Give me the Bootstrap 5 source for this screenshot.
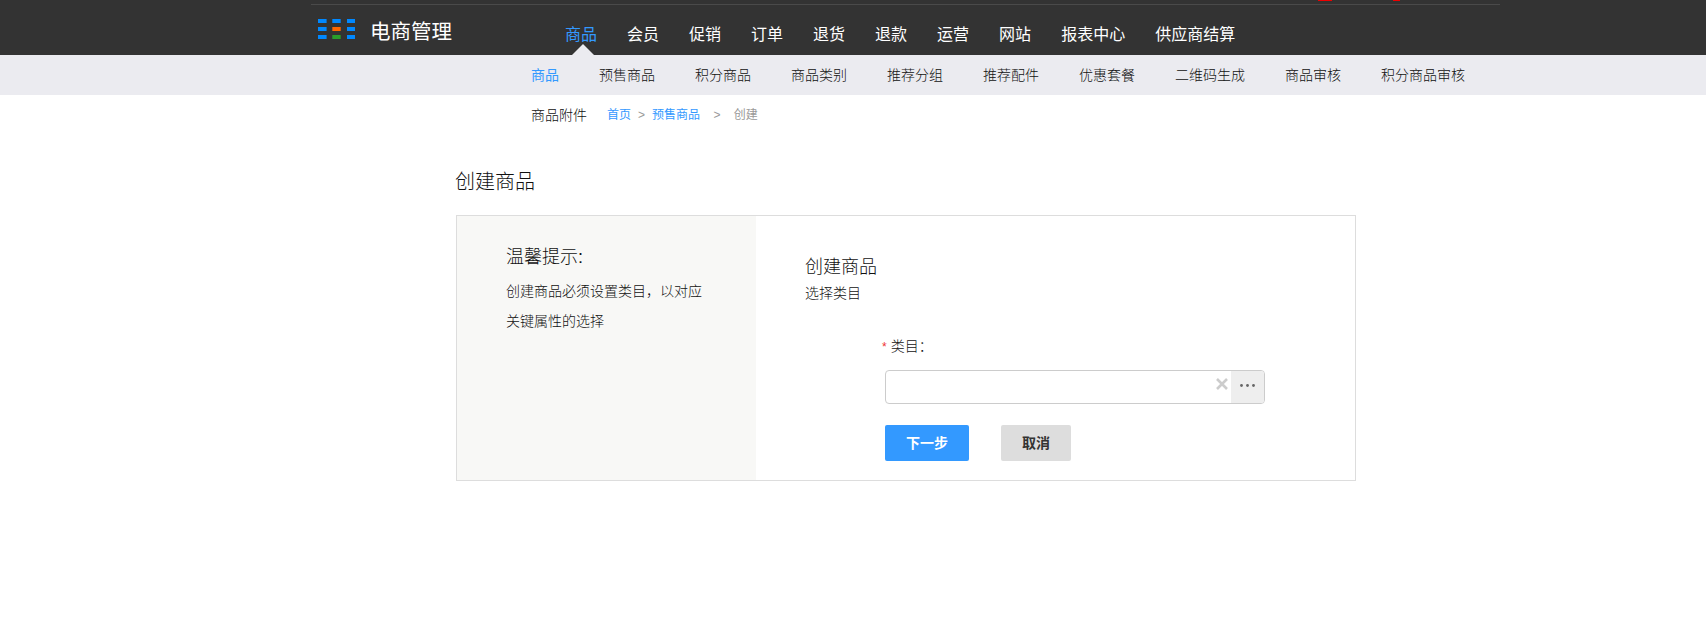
<!DOCTYPE html>
<html lang="zh-CN">
<head>
<meta charset="utf-8">
<title>创建商品</title>
<link href="https://cdn.jsdelivr.net/npm/bootstrap@5.3.0/dist/css/bootstrap.min.css" rel="stylesheet">
<style>
body{font-family:"Liberation Sans","Noto Sans CJK SC",sans-serif;color:#333;background:#fff;font-size:14px;height:623px;overflow:hidden}
a{text-decoration:none}
.hd-bar{background:#333;height:55px}
.hd-strip{height:5px;margin-left:311px;width:1189px;border-bottom:1px solid #4a4a4a;position:relative}
.hd-mark{position:absolute;top:0;height:1px;background:#e00}
.hd-mark.m1{left:1007px;width:14px}
.hd-mark.m2{left:1082px;width:7px}
.hd-main{height:50px;padding-left:318px}
.hd-logo{width:37px;margin-top:14px;display:block}
.hd-title{color:#fff;font-size:20.5px;font-weight:400;margin-left:15px;width:195px;line-height:28px;margin-top:13px}
.hd-nav{font-size:16px;gap:30px;padding-top:17px}
.hd-nav a{color:#fff;line-height:26px;position:relative;display:block;height:33px;font-weight:400}
.hd-nav a.on{color:#39f}
.hd-nav a.on::after{content:"";position:absolute;left:7px;bottom:0;border:11px solid transparent;border-top:0;border-bottom-color:#ebebf0}
.sub-bar{background:#ebebf0;height:40px;padding-left:531px;gap:40px;font-size:14px;line-height:40px;font-weight:300}
.sub-bar a{color:#111}
.sub-bar a.on{color:#39f;font-weight:400}
.crumb-row{height:40px;padding-left:531px;line-height:40px}
.crumb-own{width:76px;color:#111;font-weight:300}
.crumb-row .trail{font-size:12px;color:#999}
.crumb-row .trail a{color:#39f}
.crumb-row .sep{margin:0 7px}
.crumb-row .sep-wide{margin:0 10px}
.page-ttl{font-size:20px;font-weight:300;line-height:28px;margin:33px 0 19px 455px;color:#111}
.panel-box{margin-left:456px;width:900px;height:266px;border:1px solid #ddd}
.tip-side{width:299px;background:#f8f8f6;padding:28px 0 0 49px}
.tip-ttl{font-size:18px;line-height:26px;font-weight:300;margin:0 0 6px;color:#111}
.tip-txt{line-height:30px;margin:0;width:200px;font-size:14px;font-weight:300;color:#111}
.form-side{padding:25px 0 0 49px}
.form-ttl{font-size:18px;line-height:26px;font-weight:300;margin:13px 0 1px;color:#111}
.form-sub{font-size:14px;line-height:24px;margin:0;font-weight:300;color:#111}
.form-body{padding:31px 0 0 80px}
.lab-row{font-size:14px;line-height:20px;margin-left:-3px;margin-bottom:13px;font-weight:300;color:#111}
.lab-row span{color:#e33;font-size:12px;margin-right:4px;font-weight:400}
.pick-box{width:380px;height:34px;border:1px solid #ccc;border-radius:4px;overflow:hidden}
.pick-in{border:0;outline:0;background:transparent;min-width:0}
.pick-x{width:22px;display:flex;align-items:center;justify-content:center;padding:0 0 6px 3px}
.pick-more{width:33px;background:#eee;display:flex;align-items:center;justify-content:center;padding-bottom:3px}
.btn-row{margin-top:21px;gap:32px}
.act{height:36px;border-radius:2px;font-size:14px;font-weight:700;border:0;padding:0}
.act-go{width:84px;background:#39f;color:#fff}
.act-no{width:70px;background:#ddd;color:#333}
</style>
</head>
<body>
<header class="hd-bar">
  <div class="hd-strip"><i class="hd-mark m1"></i><i class="hd-mark m2"></i></div>
  <div class="hd-main d-flex">
    <svg class="hd-logo" viewBox="0 0 37 20" height="20" aria-hidden="true">
      <g fill="#08f">
        <rect x="0" y="0" width="8.6" height="4"/><rect x="14.3" y="0" width="8.4" height="4"/><rect x="29" y="0" width="8" height="4"/>
        <rect x="0" y="8" width="8.6" height="4"/><rect x="29" y="8" width="8" height="4"/>
        <rect x="0" y="16" width="8.6" height="4"/><rect x="29" y="16" width="8" height="4"/>
      </g>
      <rect x="14.3" y="8" width="8.4" height="4" fill="#f60"/>
      <rect x="14.3" y="16" width="8.4" height="4" fill="#2a9d2a"/>
    </svg>
    <div class="hd-title">电商管理</div>
    <nav class="hd-nav d-flex">
      <a class="on" href="#">商品</a><a href="#">会员</a><a href="#">促销</a><a href="#">订单</a><a href="#">退货</a><a href="#">退款</a><a href="#">运营</a><a href="#">网站</a><a href="#">报表中心</a><a href="#">供应商结算</a>
    </nav>
  </div>
</header>
<nav class="sub-bar d-flex">
  <a class="on" href="#">商品</a><a href="#">预售商品</a><a href="#">积分商品</a><a href="#">商品类别</a><a href="#">推荐分组</a><a href="#">推荐配件</a><a href="#">优惠套餐</a><a href="#">二维码生成</a><a href="#">商品审核</a><a href="#">积分商品审核</a>
</nav>
<div class="crumb-row d-flex">
  <div class="crumb-own">商品附件</div>
  <div class="trail"><a href="#">首页</a><span class="sep">&gt;</span><a href="#">预售商品</a><span class="sep-wide sep">&nbsp;&gt;&nbsp;</span>创建</div>
</div>
<h1 class="page-ttl">创建商品</h1>
<section class="panel-box d-flex">
  <aside class="tip-side">
    <h2 class="tip-ttl">温馨提示:</h2>
    <p class="tip-txt">创建商品必须设置类目，以对应关键属性的选择</p>
  </aside>
  <div class="form-side flex-grow-1">
    <h2 class="form-ttl">创建商品</h2>
    <p class="form-sub">选择类目</p>
    <div class="form-body">
      <div class="lab-row"><span>*</span>类目：</div>
      <div class="pick-box d-flex">
        <input class="pick-in flex-grow-1" type="text" aria-label="类目">
        <div class="pick-x"><svg width="12" height="12" viewBox="0 0 12 12" aria-hidden="true"><path d="M1 1l10 10M11 1l-10 10" stroke="#ccc" stroke-width="2.6" fill="none"/></svg></div>
        <div class="pick-more"><svg width="15" height="3" viewBox="0 0 15 3" aria-hidden="true"><g fill="#666"><circle cx="1.5" cy="1.5" r="1.4"/><circle cx="7.5" cy="1.5" r="1.4"/><circle cx="13.5" cy="1.5" r="1.4"/></g></svg></div>
      </div>
      <div class="btn-row d-flex">
        <button class="act act-go" type="button">下一步</button>
        <button class="act act-no" type="button">取消</button>
      </div>
    </div>
  </div>
</section>
<script src="https://cdn.jsdelivr.net/npm/bootstrap@5.3.0/dist/js/bootstrap.bundle.min.js"></script>
</body>
</html>
